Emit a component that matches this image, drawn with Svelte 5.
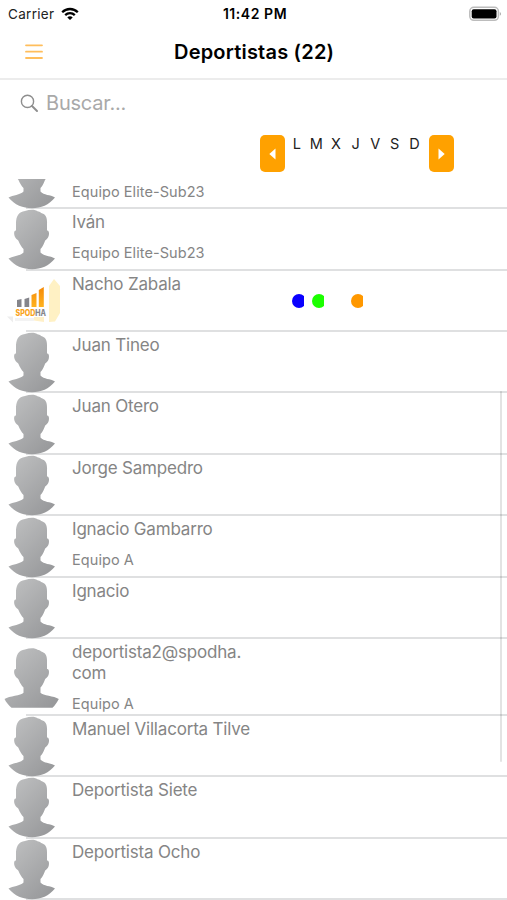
<script>
  const days = ['L', 'M', 'X', 'J', 'V', 'S', 'D'];
  const athletes = [
    { name: '', team: 'Equipo Elite-Sub23' },
    { name: 'Iván', team: 'Equipo Elite-Sub23' },
    { name: 'Nacho Zabala', logo: true, marks: ['#0a00ff', '#1bff00', '', '#ff9800'] },
    { name: 'Juan Tineo' },
    { name: 'Juan Otero' },
    { name: 'Jorge Sampedro' },
    { name: 'Ignacio Gambarro', team: 'Equipo A' },
    { name: 'Ignacio' },
    { name: 'deportista2@spodha.', more: 'com', team: 'Equipo A', tall: true },
    { name: 'Manuel Villacorta Tilve' },
    { name: 'Deportista Siete' },
    { name: 'Deportista Ocho' },
  ];
</script>

<div class="screen">
  <div class="status">
    <div class="carrier">
      <span>Carrier</span>
      <svg width="18" height="14" viewBox="0 0 18 14" fill="none" stroke="#000" stroke-width="2.3">
        <path d="M1.2 5.2C5.6 .9 12.4 .9 16.8 5.2" />
        <path d="M4.2 8.1C6.9 5.5 11.1 5.5 13.8 8.1" />
        <path d="M9 13 6.3 10.4C7.8 8.9 10.2 8.9 11.7 10.4Z" fill="#000" stroke="none" />
      </svg>
    </div>
    <div class="time">11:42 PM</div>
    <svg class="battery" width="33" height="16" viewBox="0 0 33 16">
      <rect x=".8" y="1.3" width="28.6" height="13" rx="4" fill="#fff" stroke="#bcbcbc" stroke-width="1.5" />
      <rect x="2.7" y="3.2" width="24.8" height="9.2" rx="2" fill="#000" />
      <path d="M30.8 6c1.6.6 1.6 3.2 0 3.8z" fill="#aaa" />
    </svg>
  </div>

  <header>
    <svg class="menu" width="18" height="16" viewBox="0 0 18 16" stroke="#ffbe5c" stroke-width="1.8" stroke-linecap="round">
      <path d="M1 1.3H17M1 7.7H17M1 14H17" />
    </svg>
    <h1>Deportistas (22)</h1>
  </header>

  <div class="search">
    <svg width="19" height="19" viewBox="0 0 19 19" fill="none" stroke="#8e8e8e" stroke-width="1.4" stroke-linecap="round">
      <circle cx="7.5" cy="7.4" r="6.1" />
      <path d="M12 12l5 5" stroke-width="2" />
    </svg>
    <span>Buscar...</span>
  </div>

  <div class="week">
    <button aria-label="Semana anterior"><svg width="7" height="12" viewBox="0 0 7 12"><path d="M6.5.5v11L.3 6z" fill="#fff" /></svg></button>
    <div class="days">
      {#each days as d}<span>{d}</span>{/each}
    </div>
    <button aria-label="Semana siguiente"><svg width="7" height="12" viewBox="0 0 7 12"><path d="M.5.5v11L6.7 6z" fill="#fff" /></svg></button>
  </div>

  <div class="list">
    {#each athletes as a, i}
      <div class="row" class:first={i === 0} class:tall={a.tall}>
        <div class="avatar">
          {#if a.logo}
            <svg width="64" height="61" viewBox="0 0 64 61">
              <defs>
                <linearGradient id="bar" x1="0" y1="0" x2="0" y2="1"><stop offset="0" stop-color="#f58a08" /><stop offset="1" stop-color="#ffb320" /></linearGradient>
                <linearGradient id="word" gradientUnits="userSpaceOnUse" x1="15.5" y1="0" x2="46" y2="0"><stop offset=".64" stop-color="#f9a11d" /><stop offset=".64" stop-color="#87878a" /></linearGradient>
              </defs>
              <path d="M49 16 54 9 60 16V43L55 51.5 49 52z" fill="#fff1c4" />
              <path d="M34 47h10v5l-10-1.500z" fill="#fff0c8" />
              <path d="M7 46.500h6v6z" fill="#ededed" />
              <path d="M15 48h19v3H15z" fill="#f3f3f3" />
              <path d="M17 30l4.500-1v8H17zM24.500 29l4.700-1.500V37h-4.700z" fill="#85858b" />
              <path d="M31.500 25l5-2v14h-5zM38.800 20l5-3v20h-5z" fill="url(#bar)" />
              <text x="15.500" y="46" font-size="8.300" font-weight="800" textLength="30.500" lengthAdjust="spacingAndGlyphs" fill="url(#word)">SPODHA</text>
            </svg>
          {:else}
            <svg width="64" height="61.450" viewBox="0 0 64 61.450">
              <defs>
                <linearGradient id="skin{i}" x1=".1" y1=".1" x2=".8" y2="1"><stop offset="0" stop-color="#bcbdbe" /><stop offset="1" stop-color="#98999b" /></linearGradient>
              </defs>
              {#if a.tall}
                <path transform="translate(0 7.500)" fill="url(#skin{i})" d="M16 17C15.700 8 18.500 4 25 3C30 1.500 35 1.300 38 3.500C39.500 3 40.500 5 42.500 5.500C46.500 7 47.300 11 47 16.500V22.500C49.800 22 49.500 28.500 47.300 30.500C46.500 31.500 45.500 32 45 33C43.500 37 42 39.500 40.500 41V46.300C43 49.500 54 49.300 58.800 52.500C57 56 55 59 52.500 61.300H11.500C9 59 6 56 4.500 52.500C9.500 49.300 21 49.500 23.500 46.300V41C21.500 39 20 36.500 18.500 33C18 32 17 31.500 16 30.500C13.500 27.500 13.500 22 16 22.500Z" />
              {:else}
                <path fill="url(#skin{i})" d="M16 17C15.700 8 18.500 4 25 3C30 1.500 35 1.300 38 3.500C39.500 3 40.500 5 42.500 5.500C46.500 7 47.300 11 47 16.500V22.500C49.800 22 49.500 28.500 47.300 30.500C46.500 31.500 45.500 32 45 33C43.500 37 42 39.500 40.500 41V44.500C44 48.500 50 47.500 55 50.500C49 58 41 61.200 32 61.200C23 61.200 14.500 58 8.500 50.500C13 48 20 48 23.500 44.500V41C21.500 39 20 36.500 18.500 33C18 32 17 31.500 16 30.500C13.500 27.500 13.500 22 16 22.500Z" />
              {/if}
            </svg>
          {/if}
        </div>
        <div class="body">
          <div class="name">{a.name}{#if a.more}<br />{a.more}{/if}</div>
          {#if a.team}<div class="team">{a.team}</div>{/if}
        </div>
        {#if a.marks}
          <div class="marks">
            {#each a.marks as color}
              <span class="mark"><svg width="12" height="14" viewBox="0 0 12 14">{#if color}<circle cx="7" cy="7" r="7" fill={color} />{/if}</svg></span>
            {/each}
          </div>
        {/if}
      </div>
    {/each}
  </div>
  <div class="scrollbar"></div>
</div>

<style>
  :global(body) { margin: 0; background: #fff; }
  .screen {
    position: relative;
    display: flex;
    flex-direction: column;
    width: 507px;
    height: 900px;
    overflow: hidden;
    background: #fff;
    color: #000;
    font-family: Inter, "Liberation Sans", sans-serif;
  }
  svg { display: block; flex: none; }
  .status {
    display: grid;
    grid-template-columns: 1fr auto 1fr;
    align-items: center;
    height: 27px;
    padding: 0 5px 0 8px;
    box-sizing: border-box;
    font-size: 13.500px;
    flex: none;
  }
  .carrier { display: flex; align-items: center; gap: 7px; color: #222; letter-spacing: .3px; }
  .time { font-size: 14px; font-weight: 600; letter-spacing: .55px; }
  .battery { justify-self: end; }
  header {
    display: grid;
    grid-template-columns: 174px 1fr;
    align-items: center;
    height: 53px;
    padding-bottom: 1px;
    box-sizing: border-box;
    border-bottom: 2px solid #ececec;
    flex: none;
  }
  .menu { margin-left: 25px; }
  h1 { margin: 0; font-size: 20px; font-weight: 600; letter-spacing: .2px; white-space: nowrap; }
  .search {
    display: flex;
    align-items: center;
    gap: 7px;
    height: 46px;
    padding-left: 20px;
    font-size: 20px;
    letter-spacing: -.200px;
    color: #a9a9a9;
    flex: none;
  }
  .week {
    display: flex;
    align-items: flex-start;
    height: 53px;
    padding: 9px 0 0 260px;
    box-sizing: border-box;
    flex: none;
  }
  .week button {
    display: flex;
    align-items: center;
    justify-content: center;
    width: 25px;
    height: 37px;
    padding: 0;
    border: 0;
    border-radius: 5px;
    background: #ffa100;
  }
  .days {
    display: grid;
    grid-template-columns: repeat(7, 19.600px);
    width: 137px;
    padding-left: 2px;
    margin-right: 5px;
    font-size: 14.500px;
    line-height: 18px;
    color: #222;
    justify-items: center;
  }
  .list { height: 721px; overflow: hidden; flex: none; }
  .row {
    display: flex;
    height: 61.450px;
    box-sizing: border-box;
    position: relative;
  }
  .row::after {
    content: "";
    position: absolute;
    left: 26px;
    right: 0;
    bottom: -.700px;
    height: 2px;
    background: #dfe0e1;
    z-index: -1;
  }
  .list { position: relative; z-index: 0; }
  .row.first { margin-top: -32px; }
  .row.tall { height: 76.500px; }
  .avatar { width: 72px; flex: none; }
  .avatar svg { overflow: visible; }
  .body { width: 220px; color: #858585; }
  .name { height: 20.500px; padding-top: 3.700px; font-size: 17px; line-height: 20.500px; letter-spacing: -.190px; white-space: nowrap; }
  .tall .name { height: 41px; }
  .team { padding-top: 11.500px; font-size: 14.500px; line-height: 18px; letter-spacing: .070px; white-space: nowrap; }
  .marks { display: flex; padding-top: 24px; }
  .mark { width: 19.500px; }
  .mark svg { overflow: hidden; }
  .scrollbar {
    position: absolute;
    left: 500px;
    top: 391px;
    width: 2px;
    height: 371px;
    border-radius: 1px;
    background: rgba(0, 0, 0, .11);
  }
</style>
